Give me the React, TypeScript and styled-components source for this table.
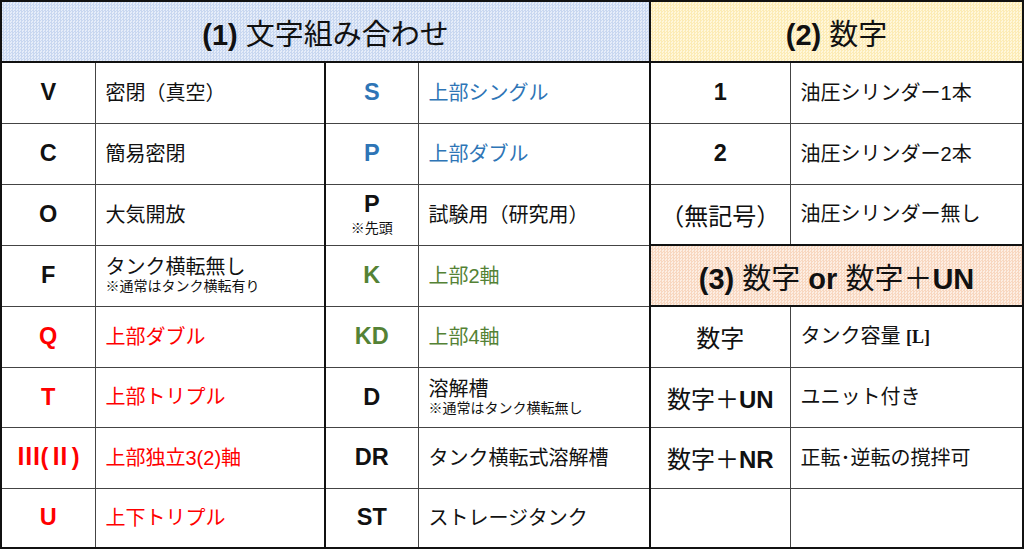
import React from "react";
import styled, { createGlobalStyle, css } from "styled-components";

const Global = createGlobalStyle`
  html, body { margin: 0; padding: 0; background: #fff; }
  body { font-family: "Liberation Sans", "Noto Sans CJK JP", sans-serif; }
`;

const JP = `"Liberation Sans", "Noto Sans CJK JP", sans-serif`;

const Table = styled.table`
  border-collapse: collapse;
  table-layout: fixed;
  width: 1022px;
  margin: 0;
  border: 2px solid #111;
  font-family: ${JP};
  color: #111;
`;

type Tone = "black" | "blue" | "green" | "red";
const toneColor: Record<Tone, string> = {
  black: "#111",
  blue: "#2e75b6",
  green: "#548235",
  red: "#ff0000",
};

type Fill = "blue" | "yellow" | "orange";
const fills: Record<Fill, [string, string]> = {
  blue: ["#c8d7f0", "#e6edf9"],
  yellow: ["#fcebb5", "#fff7db"],
  orange: ["#f8d7c0", "#fdeee3"],
};

const Row = styled.tr<{ $h: number }>`
  height: ${(p) => p.$h}px;
`;

type Lines = { $thickRight?: boolean; $thickTop?: boolean };

const lineCss = css<Lines>`
  border: 1px solid #444;
  ${(p) => p.$thickRight && "border-right: 2px solid #111;"}
  ${(p) => p.$thickTop && "border-top: 2px solid #111;"}
`;

const Header = styled.th<{ $fill: Fill } & Lines>`
  ${lineCss};
  border-bottom: 2px solid #111;
  background-color: ${(p) => fills[p.$fill][1]};
  background-image: repeating-conic-gradient(${(p) => fills[p.$fill][0]} 0 25%, transparent 0 50%);
  background-size: 3px 3px;
  font-weight: 400;
  font-size: 29px;
  text-align: center;
  vertical-align: middle;
  padding: 0;
  white-space: nowrap;
`;

const Bold = styled.b`
  font-weight: 700;
`;

const Code = styled.td<{ $tone: Tone } & Lines>`
  ${lineCss};
  color: ${(p) => toneColor[p.$tone]};
  font-weight: 700;
  font-size: 23.5px;
  text-align: center;
  vertical-align: middle;
  padding: 0;
  line-height: 1.05;
  white-space: nowrap;
`;

const CodeJP = styled.td<{ $size: number } & Lines>`
  ${lineCss};
  font-size: ${(p) => p.$size}px;
  font-weight: 400;
  text-align: center;
  vertical-align: middle;
  padding: 0;
  white-space: nowrap;
`;

const Desc = styled.td<{ $tone: Tone } & Lines>`
  ${lineCss};
  color: ${(p) => toneColor[p.$tone]};
  font-size: 20px;
  font-weight: 400;
  text-align: left;
  vertical-align: middle;
  padding: 0 0 0 10px;
  line-height: 1.1;
  white-space: nowrap;
`;

const Note = styled.div<{ $gap?: number }>`
  font-size: 14px;
  line-height: 1.2;
  margin-top: ${(p) => p.$gap ?? 0}px;
  color: #111;
  font-weight: 400;
`;

const Serif = styled.b`
  font-family: "Liberation Serif", serif;
  font-weight: 700;
  font-size: 18px;
`;

export default function App() {
  return (
    <>
      <Global />
      <Table>
        <colgroup>
          <col style={{ width: 94 }} />
          <col style={{ width: 230 }} />
          <col style={{ width: 93 }} />
          <col style={{ width: 232 }} />
          <col style={{ width: 140 }} />
          <col style={{ width: 233 }} />
        </colgroup>
        <tbody>
          <Row $h={61}>
            <Header colSpan={4} $fill="blue" $thickRight>
              <Bold>(1)</Bold> 文字組み合わせ
            </Header>
            <Header colSpan={2} $fill="yellow">
              <Bold>(2)</Bold> 数字
            </Header>
          </Row>
          <Row $h={61}>
            <Code $tone="black">V</Code>
            <Desc $tone="black" $thickRight>密閉（真空）</Desc>
            <Code $tone="blue">S</Code>
            <Desc $tone="blue" $thickRight>上部シングル</Desc>
            <Code $tone="black">1</Code>
            <Desc $tone="black">油圧シリンダー1本</Desc>
          </Row>
          <Row $h={61}>
            <Code $tone="black">C</Code>
            <Desc $tone="black" $thickRight>簡易密閉</Desc>
            <Code $tone="blue">P</Code>
            <Desc $tone="blue" $thickRight>上部ダブル</Desc>
            <Code $tone="black">2</Code>
            <Desc $tone="black">油圧シリンダー2本</Desc>
          </Row>
          <Row $h={61}>
            <Code $tone="black">O</Code>
            <Desc $tone="black" $thickRight>大気開放</Desc>
            <Code $tone="black">
              P
              <Note $gap={3}>※先頭</Note>
            </Code>
            <Desc $tone="black" $thickRight>試験用（研究用）</Desc>
            <CodeJP $size={24}>（無記号）</CodeJP>
            <Desc $tone="black">油圧シリンダー無し</Desc>
          </Row>
          <Row $h={61}>
            <Code $tone="black">F</Code>
            <Desc $tone="black" $thickRight>
              タンク横転無し
              <Note>※通常はタンク横転有り</Note>
            </Desc>
            <Code $tone="green">K</Code>
            <Desc $tone="green" $thickRight>上部2軸</Desc>
            <Header colSpan={2} $fill="orange" $thickTop>
              <Bold>(3)</Bold> 数字 <Bold>or</Bold> 数字＋<Bold>UN</Bold>
            </Header>
          </Row>
          <Row $h={61}>
            <Code $tone="red">Q</Code>
            <Desc $tone="red" $thickRight>上部ダブル</Desc>
            <Code $tone="green">KD</Code>
            <Desc $tone="green" $thickRight>上部4軸</Desc>
            <CodeJP $size={24}>数字</CodeJP>
            <Desc $tone="black">
              タンク容量 <Serif>[L]</Serif>
            </Desc>
          </Row>
          <Row $h={60}>
            <Code $tone="red">T</Code>
            <Desc $tone="red" $thickRight>上部トリプル</Desc>
            <Code $tone="black">D</Code>
            <Desc $tone="black" $thickRight>
              溶解槽
              <Note>※通常はタンク横転無し</Note>
            </Desc>
            <CodeJP $size={24}>
              数字＋<Bold>UN</Bold>
            </CodeJP>
            <Desc $tone="black">ユニット付き</Desc>
          </Row>
          <Row $h={61}>
            <Code $tone="red">Ⅲ(Ⅱ)</Code>
            <Desc $tone="red" $thickRight>上部独立3(2)軸</Desc>
            <Code $tone="black">DR</Code>
            <Desc $tone="black" $thickRight>タンク横転式溶解槽</Desc>
            <CodeJP $size={24}>
              数字＋<Bold>NR</Bold>
            </CodeJP>
            <Desc $tone="black">正転･逆転の撹拌可</Desc>
          </Row>
          <Row $h={60}>
            <Code $tone="red">U</Code>
            <Desc $tone="red" $thickRight>上下トリプル</Desc>
            <Code $tone="black">ST</Code>
            <Desc $tone="black" $thickRight>ストレージタンク</Desc>
            <CodeJP $size={24} />
            <Desc $tone="black" />
          </Row>
        </tbody>
      </Table>
    </>
  );
}
